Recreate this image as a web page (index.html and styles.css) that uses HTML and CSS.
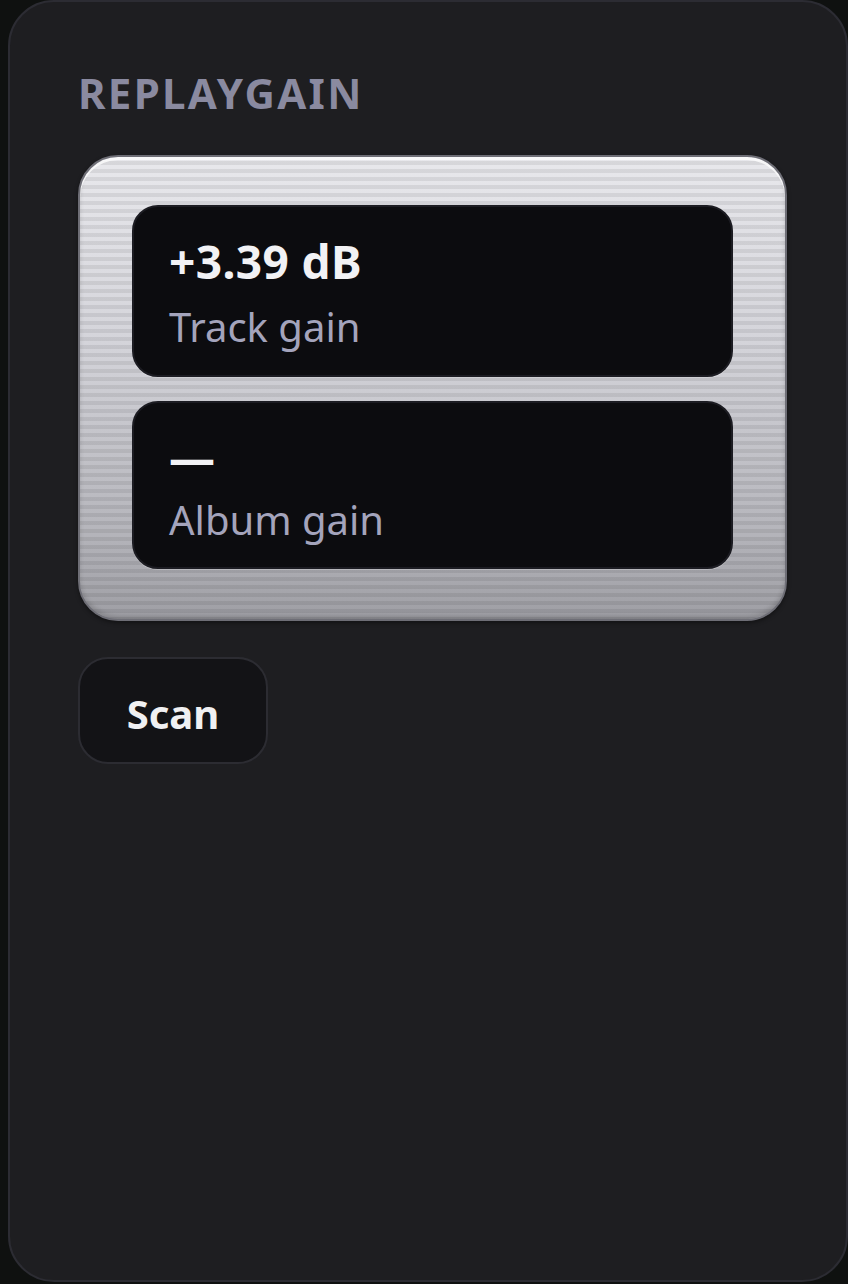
FILE: index.html
```html
<!DOCTYPE html>
<html>
<head>
<meta charset="utf-8">
<link rel="stylesheet" href="styles.css">
</head>
<body>
<div class="panel">
  <h2 class="title">REPLAYGAIN</h2>
  <div class="metal">
    <div class="card card-track">
      <div class="value">+3.39 dB</div>
      <div class="label">Track gain</div>
    </div>
    <div class="card card-album">
      <div class="value value-empty">—</div>
      <div class="label">Album gain</div>
    </div>
  </div>
  <button class="scan">Scan</button>
</div>
</body>
</html>
```
FILE: styles.css
```css
html, body {
  margin: 0;
  padding: 0;
  background: #0f1110;
  height: 100%;
}
body {
  padding-left: 8px;
  font-family: "Noto Sans", "Open Sans", sans-serif;
}
.panel {
  box-sizing: border-box;
  width: 840px;
  height: 1282px;
  background: #1e1e21;
  border: 2px solid #2c2c33;
  border-radius: 46px;
  padding: 64px 59px 0 68px;
  display: flex;
  flex-direction: column;
  align-items: flex-start;
}
.title {
  margin: 0;
  font-size: 42px;
  font-weight: 700;
  letter-spacing: 2.3px;
  color: #8a8aa0;
  line-height: 54px;
}
.metal {
  box-sizing: border-box;
  align-self: stretch;
  margin-top: 35px;
  border-radius: 40px;
  border: 2px solid #6e6e76;
  padding: 48px 52px 50px 52px;
  display: flex;
  flex-direction: column;
  gap: 24px;
  background:
    repeating-linear-gradient(180deg, rgba(255,255,255,0.0) 0px, rgba(255,255,255,0.0) 4px, rgba(0,0,0,0.075) 4px, rgba(0,0,0,0.075) 8px),
    linear-gradient(180deg, #e8e8ec 0%, #d4d4da 40%, #b6b6bc 80%, #9e9ea4 100%);
  box-shadow: inset 0 3px 0 rgba(255,255,255,0.75), inset 0 -3px 4px rgba(0,0,0,0.15), 0 2px 4px rgba(0,0,0,0.4);
}
.card {
  box-sizing: border-box;
  background: #0c0c0f;
  border: 2px solid #1c1c22;
  border-radius: 26px;
  padding: 26px 36px 0 35px;
  box-shadow: 0 1px 0 rgba(255,255,255,0.25);
}
.card-track { height: 172px; }
.card-album { height: 168px; padding-top: 23px; }
.value {
  font-size: 46px;
  font-weight: 700;
  letter-spacing: 0.4px;
  color: #f2f2f5;
  line-height: 56px;
}
.value-empty {
  padding-top: 3px;
}
.label {
  font-size: 40px;
  font-weight: 400;
  color: #a4a4bc;
  line-height: 54px;
  margin-top: 11px;
}
.value-empty + .label {
  margin-top: 8px;
}
.scan {
  margin-top: 36px;
  box-sizing: border-box;
  width: 190px;
  height: 107px;
  background: #131316;
  border: 2px solid #2c2c32;
  border-radius: 30px;
  color: #f0f0f2;
  font-family: "Noto Sans", "Open Sans", sans-serif;
  font-size: 40px;
  font-weight: 700;
  padding: 6px 0 0 0;
}
```
